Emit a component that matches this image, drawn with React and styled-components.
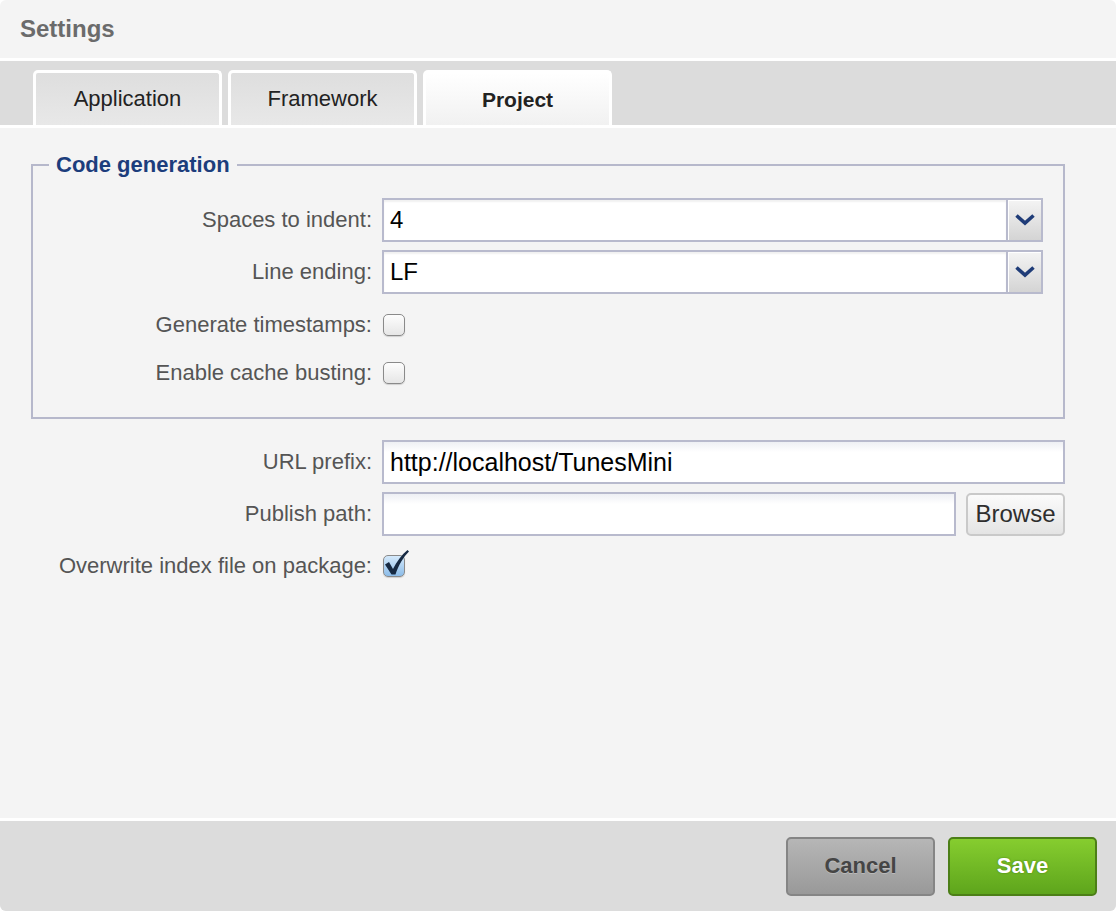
import styled, { createGlobalStyle } from 'styled-components';

const GlobalStyle = createGlobalStyle`
  html, body {
    margin: 0;
    padding: 0;
    background: #ffffff;
  }
  body {
    font-family: "Liberation Sans", Arial, sans-serif;
  }
`;

const Chevron = () => (
  <svg width="20" height="12" viewBox="0 0 20 12">
    <path d="M1.5 1.5 L10 9 L18.5 1.5" fill="none" stroke="#1f3c78" strokeWidth="3.6" />
  </svg>
);

const Select = ({ value }) => (
  <SelectBox>
    <SelectValue>{value}</SelectValue>
    <SelectArrow>
      <Chevron />
    </SelectArrow>
  </SelectBox>
);

const Checkbox = ({ checked }) => (
  <CheckWrap>
    <CheckBox $checked={checked} />
    {checked && (
      <CheckMark width="28" height="30" viewBox="0 -7 28 30">
        <path
          d="M2 9.5 L6 7 L10 14 C13.5 7 18.5 0 24.5 -5 L26 -3.5 C20.5 2 15.5 10 12.5 19.5 L8.5 19.5 Z"
          fill="#162942"
        />
      </CheckMark>
    )}
  </CheckWrap>
);

const App = () => {
  const tabs = ['Application', 'Framework', 'Project'];

  return (
    <>
      <GlobalStyle />
      <Panel>
        <Header>Settings</Header>
        <TabBar>
          {tabs.map((tab) => (
            <Tab key={tab} $active={tab === 'Project'}>{tab}</Tab>
          ))}
        </TabBar>

        <Content>
          <Fieldset>
            <Legend>Code generation</Legend>
            <Rows>
              <Row $labelWidth={339}>
                <Label>Spaces to indent:</Label>
                <Select value="4" />
              </Row>
              <Row $labelWidth={339}>
                <Label>Line ending:</Label>
                <Select value="LF" />
              </Row>
              <Row $labelWidth={339} $height={40} $offset={3}>
                <Label>Generate timestamps:</Label>
                <Checkbox />
              </Row>
              <Row $labelWidth={339} $height={40}>
                <Label>Enable cache busting:</Label>
                <Checkbox />
              </Row>
            </Rows>
          </Fieldset>

          <Rows $top={21}>
            <Row $labelWidth={341}>
              <Label>URL prefix:</Label>
              <TextInput>http://localhost/TunesMini</TextInput>
            </Row>
            <Row $labelWidth={341}>
              <Label>Publish path:</Label>
              <InputGroup>
                <TextInput />
                <BrowseButton>Browse</BrowseButton>
              </InputGroup>
            </Row>
            <Row $labelWidth={341}>
              <Label>Overwrite index file on package:</Label>
              <Checkbox checked />
            </Row>
          </Rows>
        </Content>

        <Footer>
          <ActionButton>Cancel</ActionButton>
          <ActionButton $primary>Save</ActionButton>
        </Footer>
      </Panel>
    </>
  );
};

// Styled Components
const Panel = styled.div`
  width: 1116px;
  height: 911px;
  display: flex;
  flex-direction: column;
  background: #f4f4f4;
  border-radius: 6px;
  overflow: hidden;
`;

const Header = styled.div`
  height: 61px;
  flex-shrink: 0;
  display: flex;
  align-items: center;
  padding: 0 0 0 20px;
  box-sizing: border-box;
  font-size: 24px;
  font-weight: bold;
  color: #6b6b6b;
  border-bottom: 3px solid #ffffff;
`;

const TabBar = styled.div`
  height: 67px;
  flex-shrink: 0;
  box-sizing: border-box;
  display: flex;
  align-items: flex-end;
  gap: 6px;
  padding-left: 33px;
  background: #dcdcdc;
  border-bottom: 3px solid #ffffff;
`;

const Tab = styled.div`
  width: 189px;
  height: 55px;
  box-sizing: border-box;
  display: flex;
  align-items: center;
  justify-content: center;
  padding-top: ${props => props.$active ? '1px' : '0'};
  padding-bottom: ${props => props.$active ? '0' : '1px'};
  border: 3px solid #ffffff;
  border-bottom: none;
  border-radius: 5px 5px 0 0;
  background: ${props => props.$active
    ? 'linear-gradient(#ffffff, #f1f1f1)'
    : 'linear-gradient(#dedede, #e8e8e8)'};
  font-size: ${props => props.$active ? '21px' : '22px'};
  font-weight: ${props => props.$active ? 'bold' : 'normal'};
  color: #222222;
`;

const Content = styled.div`
  flex: 1;
  padding: 25px 51px 0 31px;
  border-bottom: 3px solid #ffffff;
`;

const Fieldset = styled.fieldset`
  margin: 0;
  padding: 21px 20px 24px 0;
  border: 2px solid #b6b8cb;
  min-width: 0;
`;

const Legend = styled.legend`
  margin-left: 16px;
  padding: 0 7px;
  font-size: 22px;
  line-height: 24px;
  font-weight: bold;
  color: #1c3d7c;
`;

const Rows = styled.div`
  display: flex;
  flex-direction: column;
  gap: 8px;
  margin-top: ${props => props.$top || 0}px;
`;

const Row = styled.div`
  display: grid;
  grid-template-columns: ${props => props.$labelWidth}px 1fr;
  column-gap: 10px;
  align-items: center;
  height: ${props => props.$height || 44}px;
  margin-top: ${props => props.$offset || 0}px;
`;

const Label = styled.div`
  text-align: right;
  font-size: 22px;
  color: #555555;
  white-space: nowrap;
`;

const SelectBox = styled.div`
  height: 44px;
  box-sizing: border-box;
  display: flex;
  border: 2px solid #b8bacd;
  background: #ffffff;
`;

const SelectValue = styled.div`
  flex: 1;
  display: flex;
  align-items: center;
  padding-left: 6px;
  font-size: 24px;
  color: #000000;
  box-shadow: inset 0 2px 2px rgba(0, 0, 0, 0.06);
`;

const SelectArrow = styled.div`
  width: 33px;
  display: flex;
  align-items: center;
  justify-content: center;
  border-left: 2px solid #b8bacd;
  background: linear-gradient(#f4f4f4, #d4d4d4);
  box-shadow: inset 1px 1px 0 #ffffff;
`;

const TextInput = styled.div`
  flex: 1;
  height: 44px;
  box-sizing: border-box;
  display: flex;
  align-items: center;
  padding-left: 6px;
  border: 2px solid #b8bacd;
  background: linear-gradient(#eef0f4, #ffffff 10px);
  font-size: 25px;
  color: #000000;
`;

const InputGroup = styled.div`
  display: flex;
  align-items: center;
  gap: 10px;
`;

const BrowseButton = styled.div`
  width: 99px;
  height: 43px;
  box-sizing: border-box;
  display: flex;
  align-items: center;
  justify-content: center;
  border: 2px solid #c9c9c9;
  border-radius: 5px;
  background: linear-gradient(#fbfbfb, #e4e4e4);
  font-size: 24px;
  color: #2e2e2e;
`;

const CheckWrap = styled.div`
  position: relative;
  width: 22px;
  height: 22px;
  margin-left: 1px;
`;

const CheckBox = styled.div`
  width: 22px;
  height: 22px;
  box-sizing: border-box;
  border: 1px solid #8a8a8a;
  border-radius: 5px;
  background: ${props => props.$checked
    ? 'linear-gradient(#d4e9fb, #8cbce8)'
    : 'linear-gradient(#fdfdfd, #e6e6e6)'};
  box-shadow: 0 1px 1px rgba(0, 0, 0, 0.15);
`;

const CheckMark = styled.svg`
  position: absolute;
  left: 0;
  top: -7px;
`;

const Footer = styled.div`
  height: 90px;
  flex-shrink: 0;
  box-sizing: border-box;
  display: flex;
  align-items: center;
  justify-content: flex-end;
  gap: 13px;
  padding-right: 19px;
  background: #dcdcdc;
`;

const ActionButton = styled.div`
  width: 149px;
  height: 59px;
  box-sizing: border-box;
  display: flex;
  align-items: center;
  justify-content: center;
  border-radius: 5px;
  border: 2px solid ${props => props.$primary ? '#4c7f17' : '#858585'};
  background: ${props => props.$primary
    ? 'linear-gradient(#86cd2f, #5ea51c)'
    : 'linear-gradient(#b6b6b6, #999999)'};
  font-size: 22px;
  font-weight: bold;
  color: ${props => props.$primary ? '#ffffff' : '#454545'};
  text-shadow: ${props => props.$primary
    ? '0 0 2px rgba(60, 110, 10, 0.8)'
    : '0 1px 0 rgba(255, 255, 255, 0.25)'};
`;

export default App;
